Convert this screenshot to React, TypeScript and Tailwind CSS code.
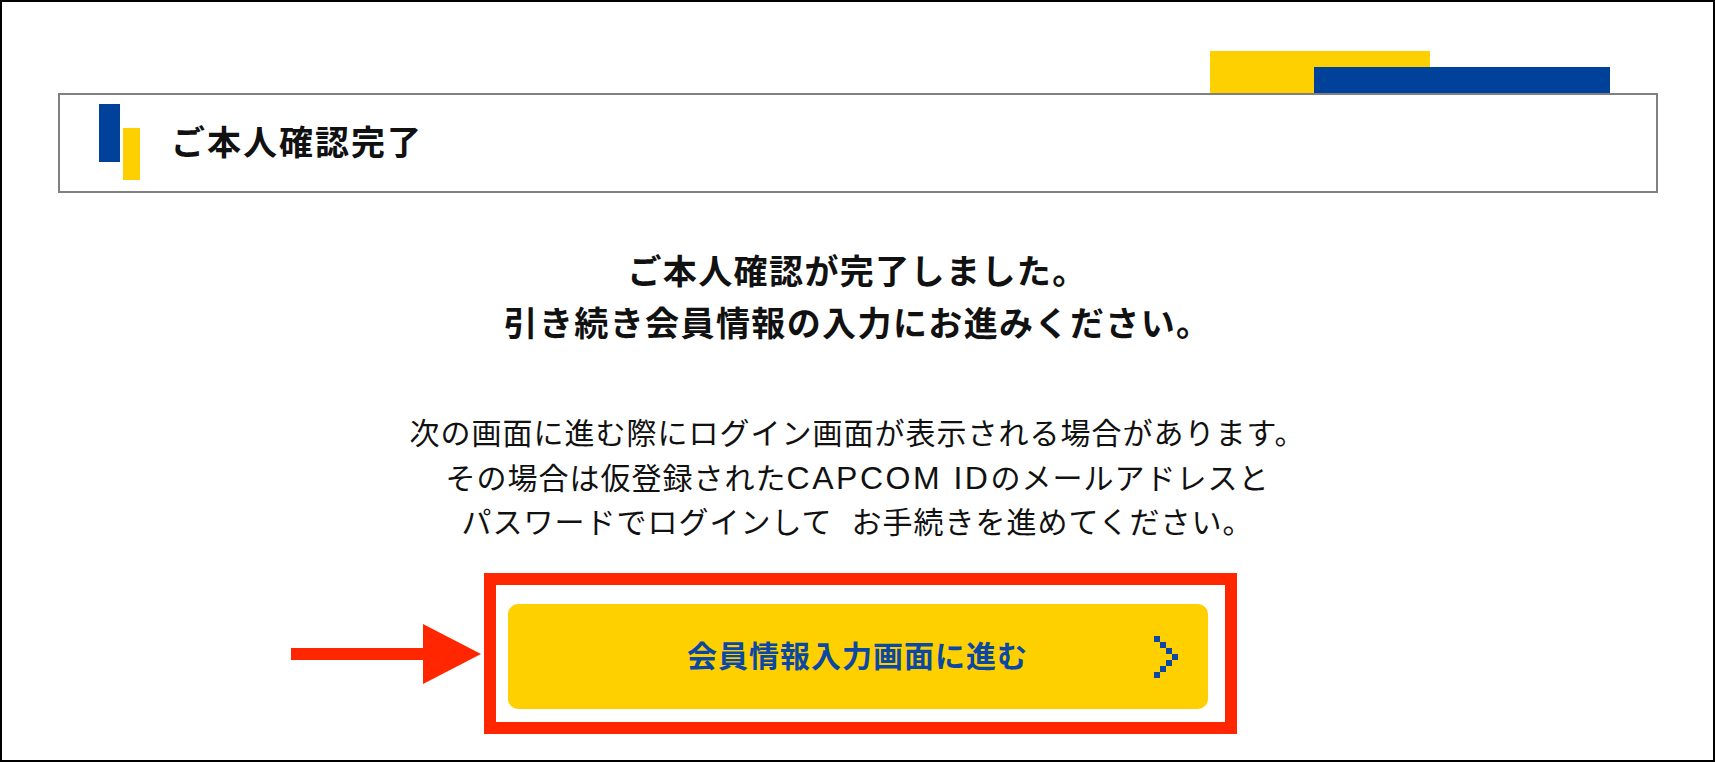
import React from "react";

const FONT = '"Liberation Sans", "Noto Sans CJK JP", sans-serif';

function Chevron() {
  const cells = [
    [0, 0],
    [6, 6],
    [12, 12],
    [18, 18],
    [12, 24],
    [6, 30],
    [0, 36],
  ];
  return (
    <svg width="24" height="42" viewBox="0 0 24 42" aria-hidden="true">
      {cells.map(([x, y], i) => (
        <rect key={i} x={x} y={y} width="6" height="6" fill="#0a48a3" />
      ))}
    </svg>
  );
}

function RedArrow() {
  return (
    <svg width="190" height="60" viewBox="0 0 190 60" aria-hidden="true">
      <rect x="0" y="24" width="134" height="12" fill="#ff2600" />
      <polygon points="132,0 190,30 132,60" fill="#ff2600" />
    </svg>
  );
}

export default function App() {
  return (
    <div
      className="w-[1715px] h-[762px] box-border border-2 border-black bg-white text-[#111] overflow-hidden"
      style={{ fontFamily: FONT }}
    >
      <div className="px-[56px] pt-[49px]">
        {/* decoration above header */}
        <div className="relative h-[42px]">
          <div className="absolute left-[1152px] top-0 w-[220px] h-[42px] bg-[#ffd000]" />
          <div className="absolute left-[1256px] top-[16px] w-[296px] h-[26px] bg-[#00429a]" />
        </div>
        {/* header box */}
        <div className="w-[1600px] h-[100px] box-border border-2 border-[#808080] flex items-start">
          <div className="flex gap-[3px] ml-[39px] mt-[9px]">
            <div className="w-[21px] h-[58px] bg-[#00429a]" />
            <div className="w-[17px] h-[52px] mt-[24px] bg-[#ffd000]" />
          </div>
          <h1 className="ml-[31px] self-center text-[34px] font-bold leading-none tracking-[2px] text-[#111]">
            ご本人確認完了
          </h1>
        </div>
      </div>

      {/* main message */}
      <div className="flex flex-col items-center">
        <div className="mt-[53px] text-center text-[34px] font-bold leading-[52px] tracking-[1.4px]">
          <p>ご本人確認が完了しました。</p>
          <p>引き続き会員情報の入力にお進みください。</p>
        </div>
        <div className="mt-[62px] text-center text-[30px] leading-[44px] tracking-[1px]">
          <p>次の画面に進む際にログイン画面が表示される場合があります。</p>
          <p>
            その場合は仮登録された<span className="text-[32px] tracking-[2.5px]">CAPCOM ID</span>のメールアドレスと
          </p>
          <p>
            パスワードでログインして<span className="inline-block w-[19px]"> </span>お手続きを進めてください。
          </p>
        </div>

        <div className="relative mt-[28px] ml-[5px] box-border border-[12px] border-[#ff2600] pt-[19px] pb-[13px] pl-[12px] pr-[17px]">
          <div className="absolute right-[calc(100%+15px)] top-1/2 -translate-y-1/2 flex">
            <RedArrow />
          </div>
          <button
            type="button"
            className="relative flex items-center justify-center w-[700px] h-[105px] rounded-[10px] bg-[#ffd000] text-[#0a48a3] text-[30px] font-bold tracking-[1px]"
            style={{ fontFamily: FONT }}
          >
            会員情報入力画面に進む
            <span className="absolute right-[30px] top-1/2 -translate-y-1/2 flex">
              <Chevron />
            </span>
          </button>
        </div>
      </div>
    </div>
  );
}
